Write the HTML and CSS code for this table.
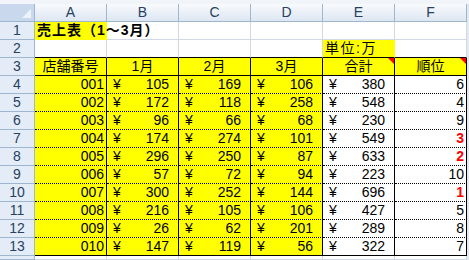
FILE: index.html
```html
<!DOCTYPE html>
<html lang="ja">
<head>
<meta charset="utf-8">
<title>売上表</title>
<link rel="stylesheet" href="styles.css">
</head>
<body>
<div class="top"></div>
<div class="grid">
  <div class="corner"></div><div class="ch">A</div><div class="ch">B</div><div class="ch">C</div><div class="ch">D</div><div class="ch">E</div><div class="ch">F</div><div class="gut"></div>

  <div class="rh">1</div><div class="c y title">売上表（1～3月）</div><div class="c"></div><div class="c"></div><div class="c"></div><div class="c"></div><div class="c"></div><div class="gut"></div>

  <div class="rh">2</div><div class="c bb"></div><div class="c bb"></div><div class="c bb"></div><div class="c bb"></div><div class="c y bb unit">単位:万</div><div class="c bb"></div><div class="gut"></div>

  <div class="rh">3</div><div class="c y br bb cen">店舗番号</div><div class="c y br bb cen">1月</div><div class="c y br bb cen">2月</div><div class="c y br bb cen">3月</div><div class="c y br bb cen cm">合計</div><div class="c y br bb cen cm">順位</div><div class="gut"></div>

  <div class="rh">4</div><div class="c y br bd num">001</div><div class="c y br bd acc"><span>¥</span><span>105</span></div><div class="c y br bd acc"><span>¥</span><span>169</span></div><div class="c y br bd acc"><span>¥</span><span>106</span></div><div class="c br bd acc"><span>¥</span><span>380</span></div><div class="c br bd num">6</div><div class="gut"></div>

  <div class="rh">5</div><div class="c y br bd num">002</div><div class="c y br bd acc"><span>¥</span><span>172</span></div><div class="c y br bd acc"><span>¥</span><span>118</span></div><div class="c y br bd acc"><span>¥</span><span>258</span></div><div class="c br bd acc"><span>¥</span><span>548</span></div><div class="c br bd num">4</div><div class="gut"></div>

  <div class="rh">6</div><div class="c y br bd num">003</div><div class="c y br bd acc"><span>¥</span><span>96</span></div><div class="c y br bd acc"><span>¥</span><span>66</span></div><div class="c y br bd acc"><span>¥</span><span>68</span></div><div class="c br bd acc"><span>¥</span><span>230</span></div><div class="c br bd num">9</div><div class="gut"></div>

  <div class="rh">7</div><div class="c y br bd num">004</div><div class="c y br bd acc"><span>¥</span><span>174</span></div><div class="c y br bd acc"><span>¥</span><span>274</span></div><div class="c y br bd acc"><span>¥</span><span>101</span></div><div class="c br bd acc"><span>¥</span><span>549</span></div><div class="c br bd num red">3</div><div class="gut"></div>

  <div class="rh">8</div><div class="c y br bd num">005</div><div class="c y br bd acc"><span>¥</span><span>296</span></div><div class="c y br bd acc"><span>¥</span><span>250</span></div><div class="c y br bd acc"><span>¥</span><span>87</span></div><div class="c br bd acc"><span>¥</span><span>633</span></div><div class="c br bd num red">2</div><div class="gut"></div>

  <div class="rh">9</div><div class="c y br bd num">006</div><div class="c y br bd acc"><span>¥</span><span>57</span></div><div class="c y br bd acc"><span>¥</span><span>72</span></div><div class="c y br bd acc"><span>¥</span><span>94</span></div><div class="c br bd acc"><span>¥</span><span>223</span></div><div class="c br bd num">10</div><div class="gut"></div>

  <div class="rh">10</div><div class="c y br bd num">007</div><div class="c y br bd acc"><span>¥</span><span>300</span></div><div class="c y br bd acc"><span>¥</span><span>252</span></div><div class="c y br bd acc"><span>¥</span><span>144</span></div><div class="c br bd acc"><span>¥</span><span>696</span></div><div class="c br bd num red">1</div><div class="gut"></div>

  <div class="rh">11</div><div class="c y br bd num">008</div><div class="c y br bd acc"><span>¥</span><span>216</span></div><div class="c y br bd acc"><span>¥</span><span>105</span></div><div class="c y br bd acc"><span>¥</span><span>106</span></div><div class="c br bd acc"><span>¥</span><span>427</span></div><div class="c br bd num">5</div><div class="gut"></div>

  <div class="rh">12</div><div class="c y br bd num">009</div><div class="c y br bd acc"><span>¥</span><span>26</span></div><div class="c y br bd acc"><span>¥</span><span>62</span></div><div class="c y br bd acc"><span>¥</span><span>201</span></div><div class="c br bd acc"><span>¥</span><span>289</span></div><div class="c br bd num">8</div><div class="gut"></div>

  <div class="rh">13</div><div class="c y br bb num">010</div><div class="c y br bb acc"><span>¥</span><span>147</span></div><div class="c y br bb acc"><span>¥</span><span>119</span></div><div class="c y br bb acc"><span>¥</span><span>56</span></div><div class="c br bb acc"><span>¥</span><span>322</span></div><div class="c br bb num">7</div><div class="gut"></div>

  <div class="rh"></div><div class="c"></div><div class="c"></div><div class="c"></div><div class="c"></div><div class="c"></div><div class="c"></div><div class="gut"></div>
</div>
</body>
</html>
```
FILE: styles.css
```css
html, body {
  margin: 0;
  padding: 0;
}
body {
  width: 469px;
  height: 260px;
  overflow: hidden;
  background: #ffffff;
  font-family: "Liberation Sans", "Noto Sans CJK JP", sans-serif;
  font-size: 14px;
}
.top {
  height: 4px;
  background: #f1f4f9;
}
.grid {
  display: grid;
  grid-template-columns: 35px repeat(6, 72px) 2px;
  grid-template-rows: repeat(14, 18px) 4px;
}
.corner {
  position: relative;
  box-sizing: border-box;
  background: #c9d8ec;
  border-right: 1px solid #9eb6ce;
  border-bottom: 1px solid #9eb6ce;
}
.corner::after {
  content: "";
  position: absolute;
  right: 3px;
  bottom: 3px;
  border-bottom: 9px solid #eef3fa;
  border-left: 9px solid transparent;
}
.ch {
  box-sizing: border-box;
  background: linear-gradient(#f8fafd, #dde6f2);
  border-right: 1px solid #9eb6ce;
  border-bottom: 1px solid #9eb6ce;
  text-align: center;
  line-height: 17px;
  color: #27415f;
}
.rh {
  box-sizing: border-box;
  background: #e4ecf7;
  border-right: 1px solid #9eb6ce;
  border-bottom: 1px solid #9eb6ce;
  text-align: center;
  line-height: 17px;
  color: #27415f;
}
.gut {
  background: #e3e9f1;
}
.c {
  box-sizing: border-box;
  border-right: 1px solid #d0d7e5;
  border-bottom: 1px solid #d0d7e5;
  line-height: 17px;
  white-space: nowrap;
  color: #000;
}
.y {
  background: #ffff00;
  border-color: #ffff00;
}
.br {
  border-right-color: #000;
}
.bb {
  border-bottom: 1px solid #000;
}
.bd {
  border-bottom: 1px dotted #000;
}
.title {
  font-weight: bold;
  padding-left: 2px;
  letter-spacing: 1px;
}
.unit {
  padding-left: 2px;
  letter-spacing: 1.5px;
}
.cen {
  text-align: center;
}
.num {
  text-align: right;
  padding-right: 2px;
}
.acc {
  display: flex;
  justify-content: space-between;
  padding: 0 9px 0 6px;
}
.red {
  color: #ff0000;
  font-weight: bold;
}
.cm {
  position: relative;
}
.cm::after {
  content: "";
  position: absolute;
  top: 0;
  right: 0;
  border-top: 6px solid #ff0000;
  border-left: 6px solid transparent;
}
```
